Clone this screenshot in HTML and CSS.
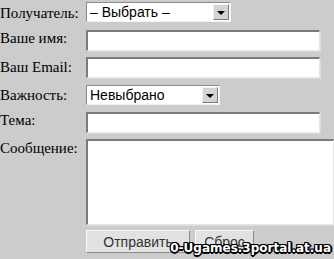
FILE: index.html
```html
<!DOCTYPE html>
<html>
<head>
<meta charset="utf-8">
<link rel="stylesheet" href="styles.css">
</head>
<body>
<div class="form">
  <div class="row r1">
    <span class="label">Получатель:</span>
    <div class="select s1"><span class="val">– Выбрать –</span><span class="btn"><span class="tri"></span></span></div>
  </div>
  <div class="row r2">
    <span class="label">Ваше имя:</span>
    <div class="input"></div>
  </div>
  <div class="row r3">
    <span class="label">Ваш Email:</span>
    <div class="input"></div>
  </div>
  <div class="row r4">
    <span class="label">Важность:</span>
    <div class="select s2"><span class="val">Невыбрано</span><span class="btn"><span class="tri"></span></span></div>
  </div>
  <div class="row r5">
    <span class="label">Тема:</span>
    <div class="input"></div>
  </div>
  <div class="row r6">
    <span class="label">Сообщение:</span>
    <div class="textarea"></div>
  </div>
  <div class="row r7">
    <span class="label"></span>
    <div class="buttons">
      <span class="button b1">Отправить</span>
      <span class="button b2">Сброс</span>
    </div>
  </div>
</div>
<div class="watermark">0-Ugames.3portal.at.ua</div>
</body>
</html>
```
FILE: styles.css
```css
html, body { margin: 0; padding: 0; }
body {
  background: #cccccc;
  width: 334px;
  height: 259px;
  overflow: hidden;
  position: relative;
}
.form {
  padding-top: 2px;
  display: flex;
  flex-direction: column;
}
.row {
  display: flex;
  align-items: flex-start;
}
.label {
  width: 86px;
  flex: none;
  font-family: "Liberation Serif", "Times New Roman", serif;
  font-size: 15px;
  color: #000;
  line-height: 17px;
  white-space: nowrap;
  box-sizing: border-box;
}
.r1 .label { padding-top: 3px; }
.r2 .label { padding-top: 0; }
.r3 .label { padding-top: 2px; }
.r4 .label { padding-top: 2px; }
.r5 .label { padding-top: 0; }
.r6 .label { padding-top: 1px; }
.r2 { margin-top: 8px; }
.r3 { margin-top: 6px; }
.r4 { margin-top: 7px; }
.r5 { margin-top: 7px; }
.r6 { margin-top: 6px; }
.r7 { margin-top: 5px; }

.input, .textarea {
  box-sizing: border-box;
  width: 234px;
  height: 21px;
  background: #fff;
  border-top: 2px solid #7b7b7b;
  border-left: 2px solid #7b7b7b;
  border-bottom: 1px solid #e6e6e6;
  border-right: 1px solid #e6e6e6;
  box-shadow: 1px 1px 0 #dcdcdc;
}
.textarea {
  width: 260px;
  height: 86px;
}
.select {
  box-sizing: border-box;
  height: 20px;
  background: #fff;
  border-top: 1px solid #8a8a8a;
  border-left: 1px solid #8a8a8a;
  border-bottom: 1px solid #f4f4f4;
  border-right: 1px solid #f4f4f4;
  display: flex;
  align-items: center;
  justify-content: space-between;
  padding: 1px;
}
.s1 { width: 145px; }
.s2 { width: 134px; }
.val {
  font-family: "Liberation Sans", Arial, sans-serif;
  font-size: 14px;
  color: #000;
  padding-left: 2px;
  line-height: 16px;
}
.btn {
  box-sizing: border-box;
  width: 16px;
  height: 16px;
  background: #d4d4d4;
  border-top: 1px solid #f2f2f2;
  border-left: 1px solid #f2f2f2;
  border-bottom: 1px solid #7a7a7a;
  border-right: 1px solid #7a7a7a;
  display: flex;
  align-items: center;
  justify-content: center;
}
.tri {
  width: 0;
  height: 0;
  border-left: 4px solid transparent;
  border-right: 4px solid transparent;
  border-top: 4px solid #000;
  margin-top: 1px;
}
.buttons {
  display: flex;
  gap: 5px;
}
.button {
  box-sizing: border-box;
  height: 23px;
  background: #e2e2e2;
  border-top: 1px solid #f8f8f8;
  border-left: 1px solid #f8f8f8;
  border-bottom: 1px solid #8a8a8a;
  border-right: 1px solid #8a8a8a;
  font-family: "Liberation Sans", Arial, sans-serif;
  font-size: 14px;
  color: #333;
  display: flex;
  align-items: center;
  justify-content: center;
}
.b1 { width: 104px; }
.b2 { width: 59px; }
.watermark {
  position: absolute;
  right: 3px;
  bottom: 3px;
  font-family: "DejaVu Sans", Verdana, sans-serif;
  font-weight: bold;
  font-size: 12px;
  line-height: 16px;
  color: #fff;
  text-shadow: 1px 0 0 #000, -1px 0 0 #000, 0 1px 0 #000, 0 -1px 0 #000, 1px 1px 0 #000, -1px -1px 0 #000, 1px -1px 0 #000, -1px 1px 0 #000, 2px 0 0 #000, 0 2px 0 #000;
}
```
